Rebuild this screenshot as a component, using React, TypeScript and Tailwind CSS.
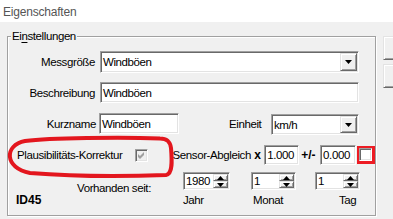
import React from "react";

const sunken =
  "border border-t-[#a0a0a0] border-l-[#a0a0a0] border-b-white border-r-white shadow-[inset_1px_1px_0_#696969,inset_-1px_-1px_0_#e3e3e3]";
const raised =
  "bg-[#f0f0f0] border border-t-[#e3e3e3] border-l-[#e3e3e3] border-b-[#696969] border-r-[#696969] shadow-[inset_1px_1px_0_#fff,inset_-1px_-1px_0_#a0a0a0]";
const bold = "font-bold text-[12px] tracking-normal";

function Edit({ value, className }: { value: string; className: string }) {
  return (
    <div className={`${sunken} flex items-center bg-white pl-[2px] ${className}`}>
      {value}
    </div>
  );
}

function Combo({ value, className }: { value: string; className: string }) {
  return (
    <div className={`${sunken} flex bg-white p-[1px] ${className}`}>
      <div className="flex flex-1 items-center pl-[1px]">{value}</div>
      <div className={`${raised} flex w-[17px] items-center justify-center`}>
        <svg width="7" height="4" viewBox="0 0 7 4">
          <path d="M0 0h7L3.5 4z" fill="#000" />
        </svg>
      </div>
    </div>
  );
}

function Spinner({ value, className }: { value: string; className: string }) {
  return (
    <div className={`${sunken} flex bg-white p-[1px] ${className}`}>
      <div className="flex flex-1 items-center pl-[1px]">{value}</div>
      <div className="flex w-[15px] flex-col">
        <div className={`${raised} flex flex-1 items-center justify-center`}>
          <svg width="7" height="4" viewBox="0 0 7 4">
            <path d="M3.5 0L7 4H0z" fill="#000" />
          </svg>
        </div>
        <div className={`${raised} flex flex-1 items-center justify-center`}>
          <svg width="7" height="4" viewBox="0 0 7 4">
            <path d="M0 0h7L3.5 4z" fill="#000" />
          </svg>
        </div>
      </div>
    </div>
  );
}

function CheckBox({ checked, disabled }: { checked?: boolean; disabled?: boolean }) {
  return (
    <div
      className={`${sunken} flex h-[13px] w-[13px] items-center justify-center ${
        disabled ? "bg-[#f0f0f0]" : "bg-white"
      }`}
    >
      {checked && (
        <svg width="7" height="7" viewBox="0 0 7 7">
          <path d="M0 2L2 4L6 0V3L2 7L0 5Z" fill={disabled ? "#a0a0a0" : "#000"} />
        </svg>
      )}
    </div>
  );
}

export default function App() {
  return (
    <div className="relative h-[219px] w-[393px] overflow-hidden whitespace-nowrap bg-[#f0f0f0] font-['Liberation_Sans',Arial,sans-serif] text-[11.5px] leading-[14px] tracking-[-0.4px] text-black">
      {/* Title */}
      <div className="h-[22px] bg-white pl-[3px] pt-[5px] text-[12px] tracking-[-0.2px] text-[#555]">
        Eigenschaften
      </div>

      <div className="flex">
        {/* Group box */}
        <div className="relative ml-[7px] mt-[14px] h-[180px] w-[369px] border border-[#a0a0a0] shadow-[inset_1px_1px_0_#fff,1px_1px_0_#fff]">
          <div className="absolute -top-[8px] left-[3px] bg-[#f0f0f0] px-[1px]">
            Ei<span className="underline underline-offset-2">n</span>stellungen
          </div>

          {/* Messgröße */}
          <div className="mt-[14px] flex h-[22px] items-center">
            <div className="w-[87px] text-right">Messgröße</div>
            <Combo value="Windböen" className="ml-[5px] h-[22px] w-[259px]" />
          </div>

          {/* Beschreibung */}
          <div className="mt-[9px] flex h-[21px] items-center">
            <div className="w-[87px] text-right">Beschreibung</div>
            <Edit value="Windböen" className="ml-[5px] h-[21px] w-[259px]" />
          </div>

          {/* Kurzname / Einheit */}
          <div className="mt-[10px] flex h-[22px] items-center">
            <div className="w-[88px] text-right">Kurzname</div>
            <Edit value="Windböen" className="ml-[3px] h-[21px] w-[80px] self-start" />
            <div className="ml-[50px] w-[33px]">Einheit</div>
            <Combo value="km/h" className="ml-[9px] h-[21px] w-[88px] self-end" />
          </div>

          {/* Plausibilität / Sensor-Abgleich */}
          <div className="mt-[10px] flex h-[20px] items-center">
            <div className="ml-[9px] w-[118px]">Plausibilitäts-Korrektur</div>
            <CheckBox checked disabled />
            <div className="ml-[25px] w-[82px]">Sensor-Abgleich</div>
            <div className={`w-[10px] ${bold}`}>x</div>
            <Edit value="1.000" className="h-[20px] w-[35px]" />
            <div className={`ml-[2px] w-[19px] ${bold}`}>+/-</div>
            <Edit value="0.000" className="h-[20px] w-[36px]" />
            <div className="ml-[1px] flex h-[18px] w-[18px] border-b-[3px] border-l-2 border-r-[3px] border-t-2 border-[#ed1c24]">
              <CheckBox />
            </div>
          </div>

          {/* Vorhanden seit */}
          <div className="mt-[7px] flex h-[19px] items-start">
            <div className="w-[175px] pl-[69px] pt-[9px]">Vorhanden seit:</div>
            <Spinner value="1980" className="h-[18px] w-[47px]" />
            <Spinner value="1" className="ml-[21px] h-[18px] w-[45px]" />
            <Spinner value="1" className="ml-[19px] h-[18px] w-[45px]" />
          </div>

          <div className="mt-[2px] flex h-[14px] items-center">
            <div className={`ml-[8px] w-[167px] ${bold} tracking-[0.8px]`}>ID45</div>
            <div className="w-[70px]">Jahr</div>
            <div className="w-[86px]">Monat</div>
            <div>Tag</div>
          </div>
        </div>

        {/* Dialog buttons (cut off) */}
        <div className="ml-[7px] mt-[14px] flex flex-col gap-[4px]">
          <div className={`${raised} h-[24px] w-[20px]`} />
          <div className={`${raised} h-[24px] w-[20px]`} />
        </div>
      </div>

      {/* Red annotation around Plausibilitäts-Korrektur */}
      <svg className="pointer-events-none absolute left-0 top-0" width="393" height="219">
        <path
          d="M160 138.5C120 137 50 138 25 141C4 145 4 168 30 173C80 177 140 176 166 175C173 174 172 160 171 148C170 141 167 138.5 160 138.5Z"
          fill="none"
          stroke="#e3161e"
          strokeWidth="4"
          strokeLinejoin="round"
        />
      </svg>
    </div>
  );
}
